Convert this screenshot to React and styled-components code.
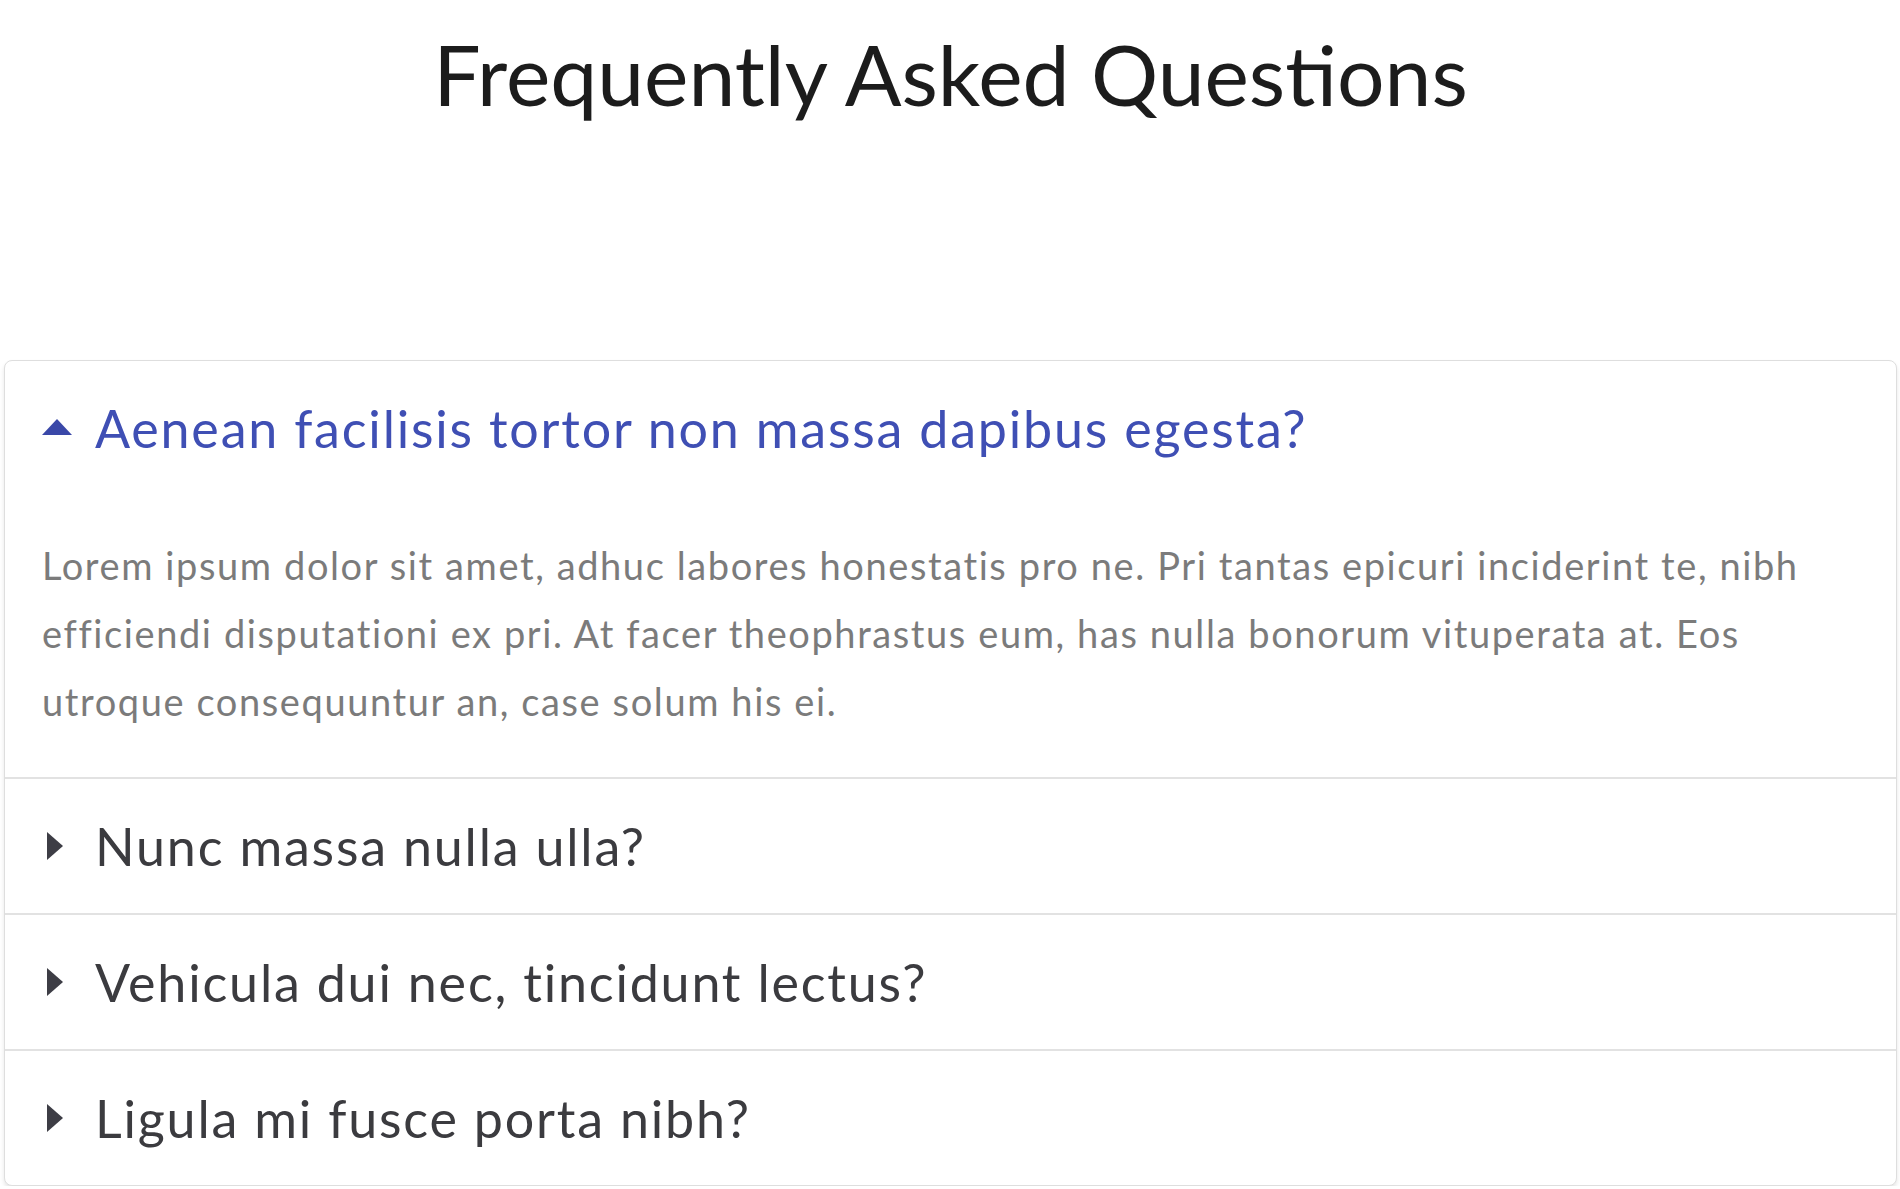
import React, { useState } from 'react';
import styled, { createGlobalStyle } from 'styled-components';

const GlobalStyle = createGlobalStyle`
  body {
    margin: 0;
    background: #ffffff;
  }
`

const Page = styled.div`
  padding: 0 3px 0 4px;
`
const Title = styled.h1`
  margin: 0;
  padding-top: 24px;
  height: 360px;
  box-sizing: border-box;
  text-align: center;
  font-family: 'Lato', 'Liberation Sans', sans-serif;
  font-weight: 400;
  font-size: 84px;
  line-height: 100px;
  color: #1c1c1c;
`
const Card = styled.div`
  border: 1px solid #dedede;
  border-radius: 8px;
  box-shadow: 0 3px 4px rgba(0, 0, 0, 0.1);
  background: #ffffff;
  overflow: hidden;
`
const Item = styled.div`
  & + & {
    border-top: 2px solid #e2e2e2;
  }
`
const Header = styled.button`
  display: flex;
  align-items: center;
  gap: 23px;
  width: 100%;
  height: 134px;
  padding: 0 0 0 37px;
  border: none;
  background: none;
  cursor: pointer;
  text-align: left;
  font-family: 'Lato', 'Liberation Sans', sans-serif;
  font-size: 52px;
  letter-spacing: 1.8px;
  color: ${p => (p.open ? '#3f4fb4' : '#3b3b3f')};
`
const Caret = styled.svg`
  flex: none;
  width: 30px;
  height: 30px;
  fill: ${p => (p.open ? '#3a48a8' : '#3d3d45')};
`
const Body = styled.div`
  padding: 36px 42px 42px 37px;
  font-family: 'Lato', 'Liberation Sans', sans-serif;
  font-size: 38px;
  letter-spacing: 1.6px;
  line-height: 68px;
  color: #7b7b7b;
`

const faqs = [
  {
    q: 'Aenean facilisis tortor non massa dapibus egesta?',
    a: 'Lorem ipsum dolor sit amet, adhuc labores honestatis pro ne. Pri tantas epicuri inciderint te, nibh efficiendi disputationi ex pri. At facer theophrastus eum, has nulla bonorum vituperata at. Eos utroque consequuntur an, case solum his ei.',
  },
  { q: 'Nunc massa nulla ulla?', a: 'Lorem ipsum dolor sit amet, adhuc labores honestatis pro ne.' },
  { q: 'Vehicula dui nec, tincidunt lectus?', a: 'Lorem ipsum dolor sit amet, adhuc labores honestatis pro ne.' },
  { q: 'Ligula mi fusce porta nibh?', a: 'Lorem ipsum dolor sit amet, adhuc labores honestatis pro ne.' },
];

const CaretIcon = ({ open }) => (
  <Caret open={open} viewBox="0 0 30 30">
    {open
      ? <polygon points="0,22 30,22 15,6" />
      : <polygon points="5,1 5,29 21,15" />}
  </Caret>
);

const App = () => {
  const [open, setOpen] = useState(0);
  return (
    <Page>
      <GlobalStyle />
      <Title>Frequently Asked Questions</Title>
      <Card>
        {faqs.map((f, i) => (
          <Item key={f.q}>
            <Header open={open === i} onClick={() => setOpen(open === i ? -1 : i)}>
              <CaretIcon open={open === i} />
              {f.q}
            </Header>
            {open === i && <Body>{f.a}</Body>}
          </Item>
        ))}
      </Card>
    </Page>
  );
};

export default App;
